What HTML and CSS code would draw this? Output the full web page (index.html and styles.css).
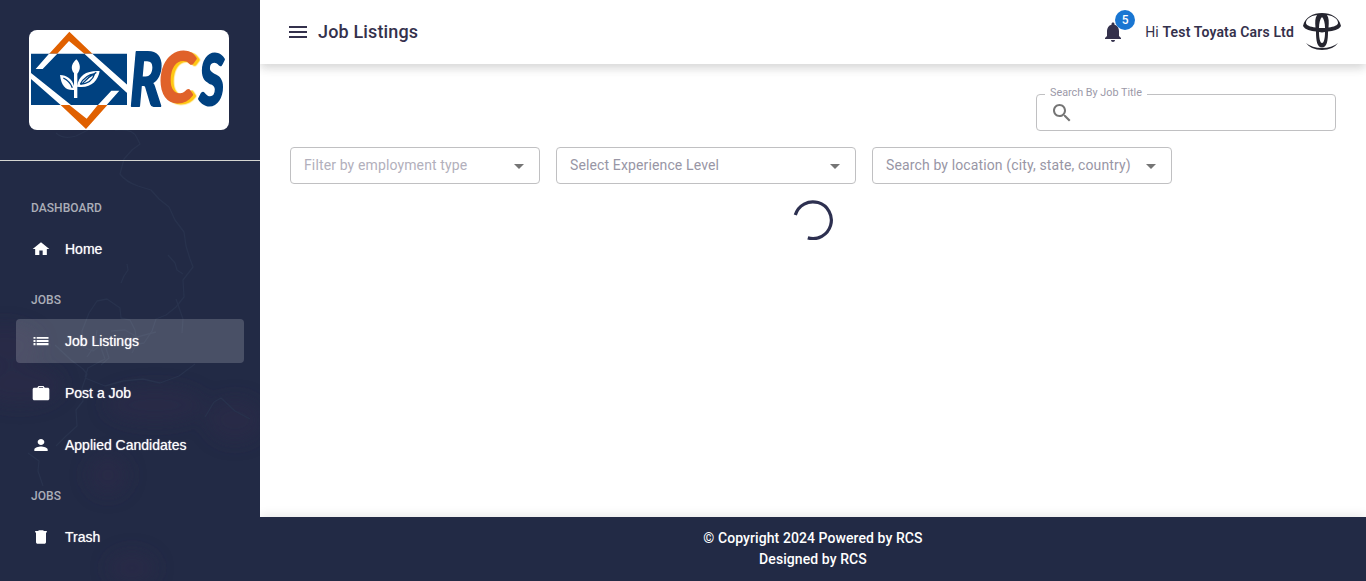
FILE: index.html
```html
<!DOCTYPE html>
<html lang="en">
<head>
<meta charset="utf-8">
<title>Job Listings</title>
<link rel="stylesheet" href="styles.css">
</head>
<body>
<div class="app">
  <aside class="sidebar">
    <svg class="backdrop" viewBox="0 0 260 581" aria-hidden="true">
      <defs><filter id="soft" x="-50%" y="-50%" width="200%" height="200%"><feGaussianBlur stdDeviation="9"/></filter></defs>
      <g fill="#2d2a48" filter="url(#soft)" opacity=".5">
        <ellipse cx="20" cy="385" rx="42" ry="20"/><ellipse cx="155" cy="405" rx="50" ry="18"/>
        <ellipse cx="235" cy="420" rx="28" ry="22"/><ellipse cx="108" cy="475" rx="20" ry="20"/>
        <ellipse cx="132" cy="568" rx="24" ry="16"/><ellipse cx="5" cy="345" rx="35" ry="20"/>
      </g>
      <g class="coast">
        <path d="M56 133q8 7 20 3l12-6M115 130q18-2 22 8l3 6-8 6-8 9-4 15q6 8 18 12l13 4 8 9 10 8 6 13 9 12 2 14 4 13 3 8-10 13 1 17-8 10-10 8-10 4-4 12-8 12-16 3-22-5-13 10-10-4-1-16 7-18 8-12 10-2 13 9 1 10 9 2 5 10 2 13-5 10"/>
        <path d="M121 283l3-7 4-6-1-6M176 299l7 20-1 14M168 255l7 8 2 7 6 4M156 332l-19 5-12-7-14 1M55 345l16 15 12 9 4 5-5 14 1 13-7 9 1 16-11 10-10 10M100 345l5 14-17 9-3 9M85 378l20 8 18-5 20-2 17 4 19-7 16-12M28 453l11 8-1 10 5 15M205 417l9-15 7-4 14 13 15 8M97 330l-2 15-8 12M105 345l4 13-8 7"/>
      </g>
    </svg>
    <div class="brand">
      <div class="brand-card">
        <svg viewBox="27 30 600 300" role="img" aria-label="RCS">
          <path fill="#e06000" d="M87 102L148 35l70 67h-24l-47-39-36 39zM121 254l77 73 65-73h-29l-34 42-53-42z"/>
          <path fill="#004180" d="M33 101h288v154H33z"/>
          <path fill="#fff" d="M33 159l120 96h-31l-89-78zM87 101h25l-44 46H47zM193 101h24l118 105v24l-18-15zM274 212h24l-38 43h-26z"/>
          <path fill="#fff" d="M162 234v-24c-23 2-38-10-42-45 20 1 37 12 42 33v-38c-14-17-3-33 7-42 12 12 15 30 3 43v37c3-32 28-47 67-45-5 31-28 53-67 47v34z"/>
          <path fill="none" stroke="#004180" stroke-width="4" d="M130 174q19 9 27 29M181 193q14-28 43-32-8 29-43 32M229 157q-25 14-42 34"/>
          <g class="logo-letters">
            <text x="329" y="257" font-size="222" textLength="98" lengthAdjust="spacingAndGlyphs" fill="#004180" stroke="#004180">R</text>
            <text class="logo-c" x="418" y="246" font-size="206" textLength="106" lengthAdjust="spacingAndGlyphs" fill="#e0622a" stroke="#e0622a">C</text>
            <text x="537" y="254" font-size="214" textLength="76" lengthAdjust="spacingAndGlyphs" fill="#004180" stroke="#004180">S</text>
          </g>
        </svg>
      </div>
    </div>
    <nav class="nav">
      <h2 class="nav-label">DASHBOARD</h2>
      <a class="nav-item"><svg viewBox="0 0 24 24" preserveAspectRatio="none"><path d="M10 20v-6h4v6h5v-8h3L12 3 2 12h3v8z"/></svg>Home</a>
      <h2 class="nav-label">JOBS</h2>
      <a class="nav-item active"><svg viewBox="0 0 24 24" preserveAspectRatio="none"><path d="M3 13.300h2.400v-2.700H3zm0 4.200h2.400v-2.700H3zM3 9.100h2.400V6.500H3zm3.800 4.200H21v-2.700H6.800zm0 4.200H21v-2.700H6.800zm0-11v2.600H21V6.500z"/></svg>Job Listings</a>
      <a class="nav-item"><svg viewBox="0 0 24 24" preserveAspectRatio="none"><path d="M20 5h-3.500L15 2.700H9L7.500 5H4c-1.110 0-2 .89-2 2v12.500c0 1.110.89 2 2 2h16c1.110 0 2-.89 2-2V7c0-1.110-.89-2-2-2zm-5.500 0h-5V4h5z"/></svg>Post a Job</a>
      <a class="nav-item"><svg viewBox="0 0 24 24" preserveAspectRatio="none"><path d="M12 12c2.210 0 4-1.790 4-4s-1.790-4-4-4-4 1.790-4 4 1.790 4 4 4zm0 2c-2.670 0-8 1.340-8 4v2h16v-2c0-2.660-5.330-4-8-4z"/></svg>Applied Candidates</a>
      <h2 class="nav-label">JOBS</h2>
      <a class="nav-item"><svg viewBox="0 0 24 24" preserveAspectRatio="none"><path d="M6 19c0 1.100.9 2 2 2h8c1.100 0 2-.9 2-2V6H6v13zM19 4h-3.500l-1-1h-5l-1 1H5v2h14V4z"/></svg>Trash</a>
    </nav>
  </aside>
  <div class="page">
    <header class="topbar">
      <svg class="icon" viewBox="0 0 24 24"><path d="M3 18h18v-2H3v2zm0-5h18v-2H3v2zm0-7v2h18V6H3z"/></svg>
      <h1 class="title">Job Listings</h1>
      <div class="bell">
        <svg class="icon" viewBox="0 0 24 24"><path d="M12 22c1.100 0 2-.9 2-2h-4c0 1.100.89 2 2 2zm6-6v-5c0-3.070-1.640-5.640-4.500-6.320V4c0-.83-.67-1.500-1.500-1.500s-1.500.67-1.500 1.500v.68C7.630 5.360 6 7.920 6 11v5l-2 2v1h16v-1l-2-2z"/></svg>
        <span class="badge">5</span>
      </div>
      <p class="greeting">Hi <strong>Test Toyata Cars Ltd</strong></p>
      <svg class="avatar" viewBox="0 0 40 40" role="img" aria-label="Company logo">
        <path fill="#25252f" fill-rule="evenodd" d="M1 14C3 5 11 1 20 1s17 4 19 13c-2 4-8 5-13 5.500 0 9-1 16-6 16s-6-7-6-16C9 19 3 18 1 14zM15 3C8 4 4 7 4 11c0 2 4 4 9.500 4.500C13 10 13 6 15 3zm10 0c2 3 2 7 1.500 12.500C32 15 36 13 36 11c0-4-4-7-11-8zM20 5c-2 2-3 6-3 11h6c0-5-1-9-3-11zm-3 15c0 6 1 11 3 11s3-5 3-11q-3 .8-6 0z"/>
        <path fill="#25252f" d="M4 31q6 5 16 5t16-5q-5 7-16 7T4 31z"/>
      </svg>
    </header>
    <main class="content">
      <fieldset class="field search">
        <legend><span>Search By Job Title</span></legend>
        <svg class="icon" viewBox="0 0 24 24"><path d="M15.500 14h-.79l-.28-.27C15.410 12.590 16 11.110 16 9.500 16 5.910 13.090 3 9.500 3S3 5.910 3 9.500 5.910 16 9.500 16c1.610 0 3.090-.59 4.230-1.570l.27.28v.79l5 4.990L20.490 19l-4.990-5zm-6 0C7.010 14 5 11.990 5 9.500S7.010 5 9.500 5 14 7.010 14 9.500 11.990 14 9.500 14z"/></svg>
      </fieldset>
      <div class="filters">
        <div class="field select narrow"><span>Filter by employment type</span><svg class="icon" viewBox="0 0 24 24"><path d="M7 10l5 5 5-5z"/></svg></div>
        <div class="field select"><span>Select Experience Level</span><svg class="icon" viewBox="0 0 24 24"><path d="M7 10l5 5 5-5z"/></svg></div>
        <div class="field select"><span>Search by location (city, state, country)</span><svg class="icon" viewBox="0 0 24 24"><path d="M7 10l5 5 5-5z"/></svg></div>
      </div>
      <svg class="spinner" viewBox="0 0 40 40"><path d="M2.300 15A18.400 18.400 0 1 1 14.800 37.900"/></svg>
    </main>
    <footer class="footer"><p>© Copyright 2024 Powered by RCS</p><p>Designed by RCS</p></footer>
  </div>
</div>
</body>
</html>
```
FILE: styles.css
```css
* { box-sizing: border-box; }
body { margin: 0; font-family: Roboto, "Liberation Sans", sans-serif; font-size: 14px; color: #34314c; background: #fff; }
h1, h2, p { margin: 0; }
svg { display: block; flex: none; }
.icon { width: 24px; height: 24px; fill: currentColor; }
.app { display: flex; height: 581px; overflow: hidden; }

.sidebar { position: relative; width: 260px; flex: none; background: #222a45; color: #fff; }
.backdrop { position: absolute; inset: 0; width: 260px; height: 581px; }
.coast { fill: none; stroke: #28324d; stroke-width: 1.3; stroke-linejoin: round; }
.brand { position: relative; height: 161px; padding: 30px 29px; border-bottom: 1px solid #d5d5d1; }
.brand-card { width: 200px; height: 100px; border-radius: 8px; background: #fff; overflow: hidden; }
.logo-letters { font-family: Lato, sans-serif; font-weight: 900; font-style: italic; stroke-width: 6; stroke-linejoin: round; }
.logo-c { filter: drop-shadow(10px 4px 0 #ffc814); }
.nav { position: relative; padding: 18px 16px 0; }
.nav-label { height: 48px; padding: 20px 15px 0; font-size: 12px; line-height: 18px; font-weight: 500; letter-spacing: .05px; color: #abaeb8; }
.nav-item { display: flex; align-items: center; gap: 14px; height: 44px; padding: 0 15px; border-radius: 4px; font-family: "Liberation Sans", Arial, sans-serif; text-shadow: 0 0 1px rgba(255, 255, 255, .7); }
.nav-item + .nav-item { margin-top: 8px; }
.nav-item svg { width: 20px; height: 18px; fill: #fff; }
.active { background: rgba(255, 255, 255, .18); }

.page { display: flex; flex: 1; flex-direction: column; min-width: 0; }
.topbar { display: flex; align-items: center; height: 64px; flex: none; padding: 0 24px 0 26px; background: #fff; box-shadow: 0 5px 8px rgba(0, 0, 0, .07), 0 2px 12px rgba(0, 0, 0, .12); clip-path: inset(0 0 -24px 0); }
.title { margin-left: 8px; padding-bottom: 2px; font-size: 18px; font-weight: 500; letter-spacing: .15px; }
.bell { position: relative; margin-left: auto; }
.badge { position: absolute; left: 14px; top: -10px; width: 20px; height: 20px; border-radius: 50%; background: #1976d2; color: #fff; font-size: 12px; line-height: 20px; font-weight: 500; text-align: center; }
.greeting { margin: 0 8px 0 20px; letter-spacing: .15px; }
.greeting strong { font-weight: 600; }
.avatar { width: 40px; height: 40px; }

.content { display: flex; flex: 1; flex-direction: column; padding: 0 30px; }
.field { height: 37px; width: 300px; border: 1px solid #c0c0c2; border-radius: 4px; }
.search { display: flex; align-items: center; align-self: flex-end; height: 44px; margin: 23px 0 0; padding: 0 13px 7px; color: #757575; }
.search legend { height: 14px; padding: 0 5px 0 5px; margin-left: -5px; font-size: 10.800px; line-height: 12px; color: #9b99a8; }
.filters { display: flex; gap: 16px; margin-top: 16px; }
.select { display: flex; align-items: center; justify-content: space-between; padding: 0 8px 0 13px; color: #9896a5; white-space: nowrap; letter-spacing: .13px; }
.select span { padding-bottom: 2px; }
.narrow { width: 250px; color: #b2b0bc; }
.select .icon { color: #757575; }
.spinner { width: 40px; height: 40px; margin: 16px auto 0; fill: none; stroke: #2d3050; stroke-width: 3.200; }
.footer { height: 64px; flex: none; padding-top: 11px; background: #222a45; color: #fff; font-weight: 500; letter-spacing: .08px; line-height: 21px; text-align: center; box-shadow: 0 -2px 10px rgba(0, 0, 0, .09); clip-path: inset(-16px 0 0 0); }
```
